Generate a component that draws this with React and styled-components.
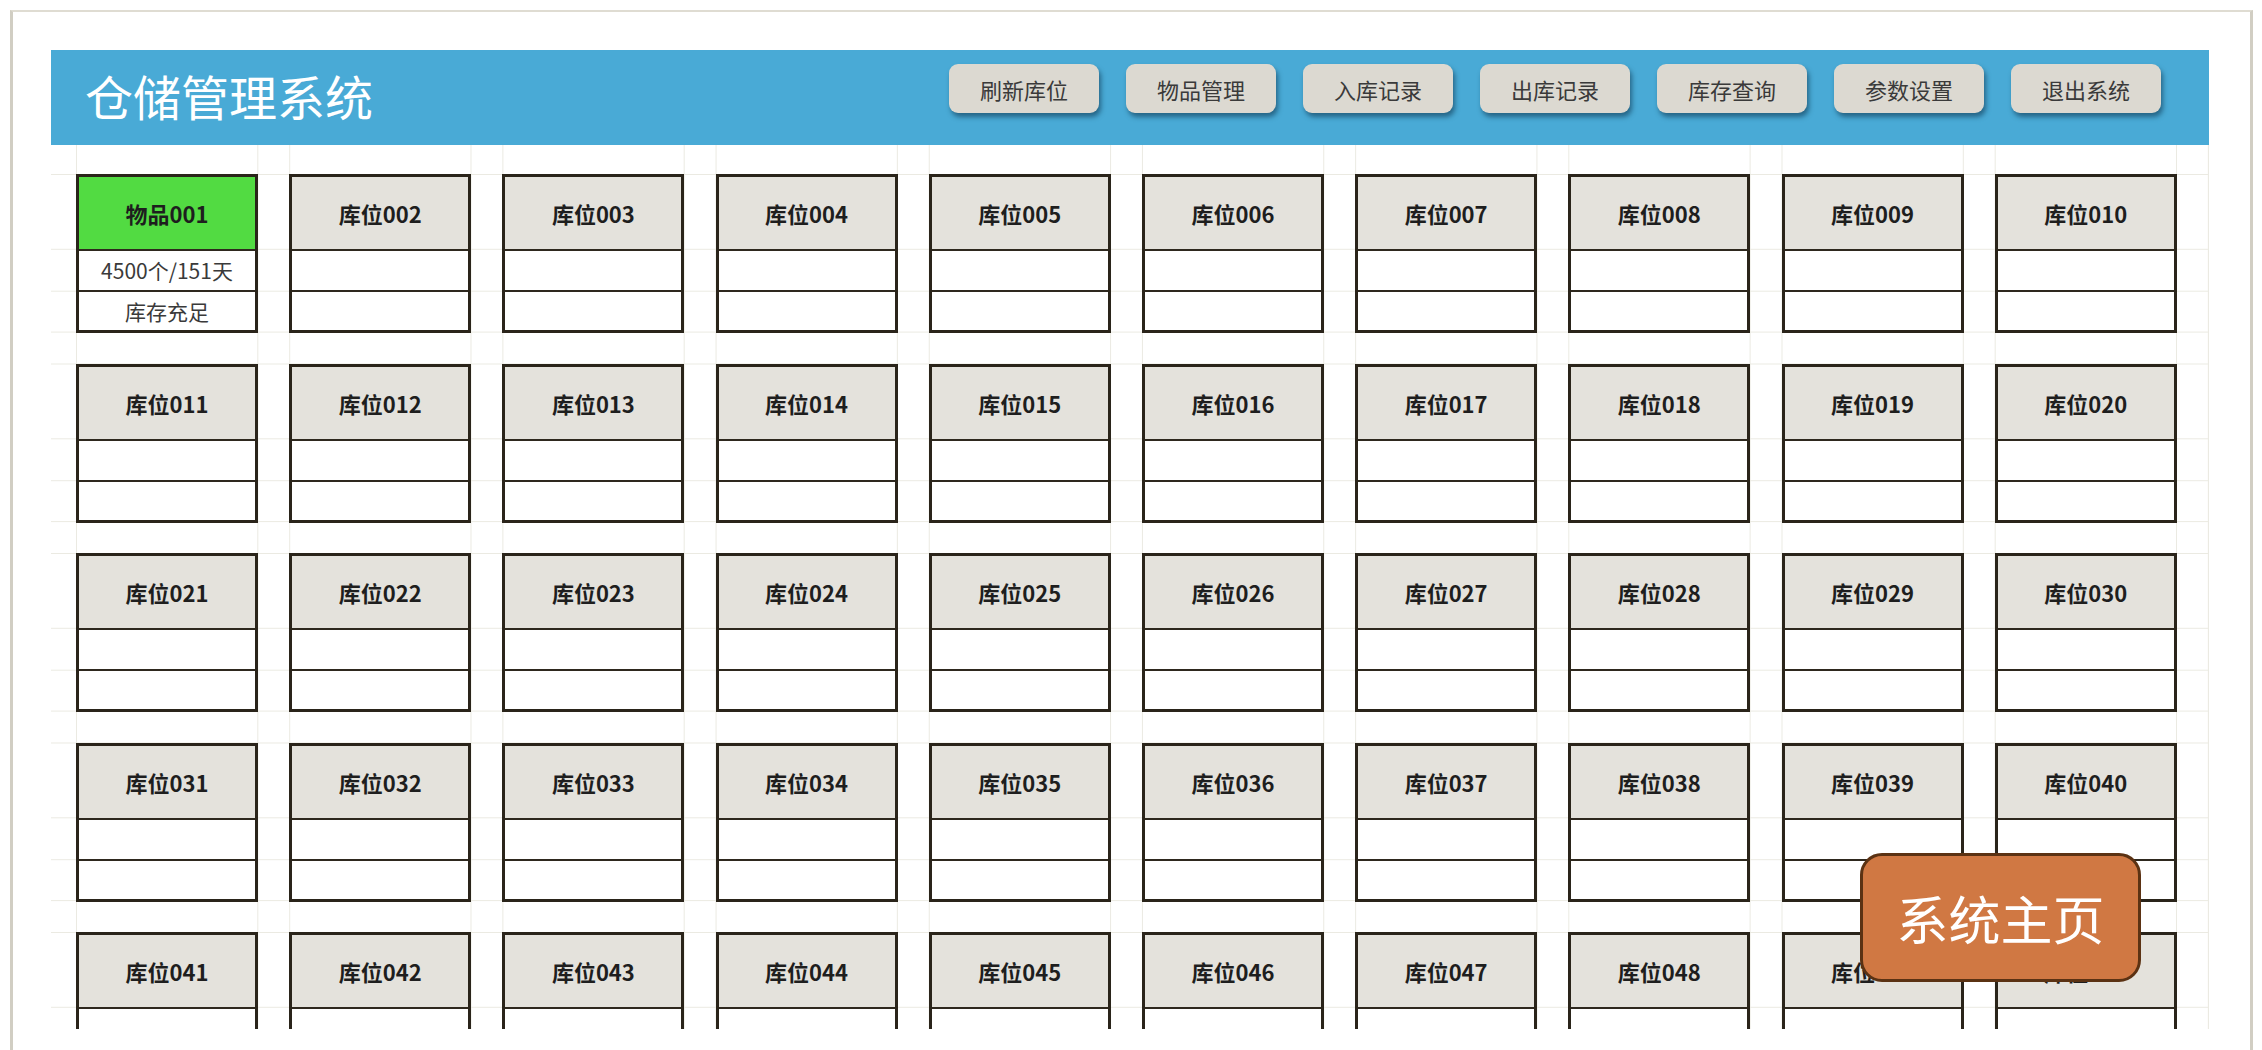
import React from 'react';
import styled, { createGlobalStyle } from 'styled-components';

const GlobalStyle = createGlobalStyle`
  html, body {
    margin: 0;
    padding: 0;
    background: #ffffff;
    overflow: hidden;
  }
  body {
    font-family: "Noto Sans CJK SC", "Noto Sans", sans-serif;
  }
`;

const GRID = '#ebeae2';

/* Outer window frame of the worksheet */
const Frame = styled.div`
  box-sizing: border-box;
  margin: 10px 0 0 10px;
  width: 2243px;
  height: 1040px;
  border-top: 2px solid #dfdcd2;
  border-left: 3px solid #d1cec3;
  border-right: 3px solid #d1cec3;
  background: #ffffff;
  padding: 38px 0 0 38px;
`;

const TitleBar = styled.header`
  box-sizing: border-box;
  width: 2158px;
  height: 95px;
  background: #49aad6;
  display: flex;
  justify-content: space-between;
  align-items: flex-start;
  padding: 0 48px 0 34px;
`;

const Title = styled.h1`
  margin: 0;
  align-self: center;
  padding-bottom: 6px;
  font-family: "Noto Sans CJK SC", sans-serif;
  font-size: 48px;
  font-weight: 400;
  line-height: 1;
  color: #ffffff;
`;

const Toolbar = styled.nav`
  display: flex;
  gap: 27px;
  margin-top: 14px;
`;

const ToolButton = styled.button`
  width: 150px;
  height: 49px;
  border: none;
  border-radius: 9px;
  background: #dcd9d1;
  box-shadow: 2px 4px 5px rgba(10, 45, 70, 0.55);
  font-family: "Noto Sans CJK SC", sans-serif;
  font-size: 22px;
  color: #3a3a3a;
  padding: 0;
  cursor: pointer;
`;

/* Worksheet area: faint cell gridlines drawn as a repeating background */
const Sheet = styled.section`
  position: relative;
  box-sizing: border-box;
  width: 2158px;
  height: 884px;
  overflow: hidden;
  padding: 29px 0 0 25px;
  border-right: 1px solid ${GRID};
  background-color: #ffffff;
  background-image:
    linear-gradient(90deg, ${GRID} 1px, transparent 1px),
    linear-gradient(90deg, transparent 181px, ${GRID} 181px, ${GRID} 182px, transparent 182px),
    linear-gradient(180deg, ${GRID} 1px, transparent 1px),
    linear-gradient(180deg, transparent 75px, ${GRID} 75px, ${GRID} 76px, transparent 76px),
    linear-gradient(180deg, transparent 117px, ${GRID} 117px, ${GRID} 118px, transparent 118px),
    linear-gradient(180deg, transparent 158px, ${GRID} 158px, ${GRID} 159px, transparent 159px);
  background-size: 213.2px 189.5px;
  background-position: 25px 29px;
`;

const SlotGrid = styled.div`
  display: grid;
  grid-template-columns: repeat(10, 182px);
  grid-auto-rows: 159px;
  column-gap: 31.2px;
  row-gap: 30.5px;
`;

const Slot = styled.div`
  box-sizing: border-box;
  border: 3px solid #2a241a;
  display: grid;
  grid-template-rows: 74px 41px 1fr;
  background: #ffffff;
`;

const SlotHeader = styled.div`
  box-sizing: border-box;
  border-bottom: 2px solid #2e281e;
  background: ${(p) => (p.$filled ? '#52db42' : '#e4e2dc')};
  display: flex;
  align-items: center;
  justify-content: center;
  font-size: 22px;
  font-weight: 700;
  color: #1e1e1e;
`;

const SlotLine = styled.div`
  box-sizing: border-box;
  border-bottom: ${(p) => (p.$last ? 'none' : '2px solid #2e281e')};
  display: flex;
  align-items: center;
  justify-content: center;
  font-size: 21px;
  color: #3a3a3a;
  line-height: 1;
`;

const HomeButton = styled.button`
  position: absolute;
  left: 1809px;
  top: 708px;
  box-sizing: border-box;
  width: 281px;
  height: 129px;
  border: 3px solid #5b3213;
  border-radius: 22px;
  background: #d07843;
  color: #ffffff;
  font-family: "Noto Sans CJK SC", sans-serif;
  font-size: 52px;
  font-weight: 400;
  padding: 0;
  display: flex;
  align-items: center;
  justify-content: center;
  cursor: pointer;
`;

const tools = ['刷新库位', '物品管理', '入库记录', '出库记录', '库存查询', '参数设置', '退出系统'];

const slots = Array.from({ length: 50 }, (_, i) => {
  const no = String(i + 1).padStart(3, '0');
  if (i === 0) {
    return { key: no, name: `物品${no}`, qty: '4500个/151天', state: '库存充足', filled: true };
  }
  return { key: no, name: `库位${no}`, qty: '', state: '', filled: false };
});

export default function App() {
  return (
    <>
      <GlobalStyle />
      <Frame>
        <TitleBar>
          <Title>仓储管理系统</Title>
          <Toolbar>
            {tools.map((t) => (
              <ToolButton key={t}>{t}</ToolButton>
            ))}
          </Toolbar>
        </TitleBar>
        <Sheet>
          <SlotGrid>
            {slots.map((s) => (
              <Slot key={s.key}>
                <SlotHeader $filled={s.filled}>{s.name}</SlotHeader>
                <SlotLine>{s.qty}</SlotLine>
                <SlotLine $last>{s.state}</SlotLine>
              </Slot>
            ))}
          </SlotGrid>
          <HomeButton>系统主页</HomeButton>
        </Sheet>
      </Frame>
    </>
  );
}
